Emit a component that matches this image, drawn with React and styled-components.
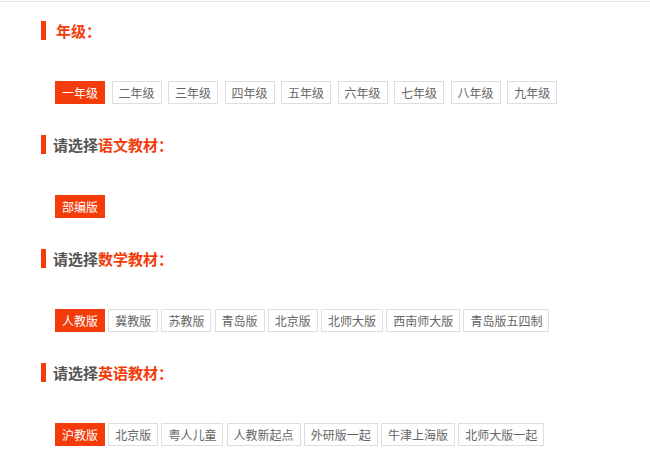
import React from 'react'
import styled, { createGlobalStyle } from 'styled-components'

const GlobalStyle = createGlobalStyle`
    body {
        margin: 0;
        background: #fff;
        font-family: "Noto Sans CJK SC", "Noto Sans", sans-serif;
    }
`;

const ORANGE = '#f33c0a';

const Page = styled.div`
    border-top: 1px solid #e6e6e6;
    margin-top: 1px;
    padding: 19px 0 0 41px;
`;

const Section = styled.section`
    margin-bottom: 31px;
`;

const Title = styled.h3`
    display: flex;
    align-items: center;
    height: 19px;
    margin: 0;
    border-left: 5px solid ${ORANGE};
    padding-left: ${({ $indent }) => $indent}px;
    font-size: 15px;
    font-weight: bold;
    color: #555;
    line-height: 19px;
`;

const Hl = styled.span`
    color: ${ORANGE};
`;

const Options = styled.div`
    display: flex;
    flex-wrap: wrap;
    gap: ${({ $gap }) => $gap}px;
    margin: 41px 0 0 14px;
`;

const Option = styled.a`
    display: block;
    height: 21px;
    line-height: 21px;
    padding: 0 6px;
    border: 1px solid ${({ $active }) => ($active ? ORANGE : '#dedede')};
    background: ${({ $active }) => ($active ? ORANGE : '#fff')};
    color: ${({ $active }) => ($active ? '#fff' : '#666')};
    font-size: 12px;
    white-space: nowrap;
    cursor: pointer;
`;

const grades = ['一年级', '二年级', '三年级', '四年级', '五年级', '六年级', '七年级', '八年级', '九年级'];

const subjects = [
    { name: '语文教材', books: ['部编版'] },
    { name: '数学教材', books: ['人教版', '冀教版', '苏教版', '青岛版', '北京版', '北师大版', '西南师大版', '青岛版五四制'] },
    { name: '英语教材', books: ['沪教版', '北京版', '粤人儿童', '人教新起点', '外研版一起', '牛津上海版', '北师大版一起'] },
];

const App = () => {
    return (
        <>
            <GlobalStyle />
            <Page>
                <Section>
                    <Title $indent={10}><Hl>年级：</Hl></Title>
                    <Options $gap={6.5}>
                        {grades.map((g, i) => (
                            <Option key={g} $active={i === 0}>{g}</Option>
                        ))}
                    </Options>
                </Section>
                {subjects.map((s) => (
                    <Section key={s.name}>
                        <Title $indent={7}>请选择<Hl>{s.name}：</Hl></Title>
                        <Options $gap={3.2}>
                            {s.books.map((b, i) => (
                                <Option key={b} $active={i === 0}>{b}</Option>
                            ))}
                        </Options>
                    </Section>
                ))}
            </Page>
        </>
    )
}

export default App
